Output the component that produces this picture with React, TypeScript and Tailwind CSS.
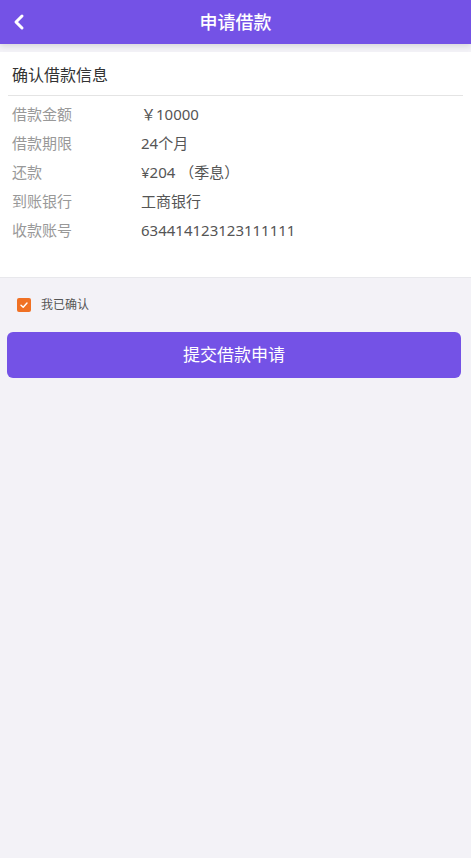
import React from 'react';

const rows: [string, string][] = [
  ['借款金额', '￥10000'],
  ['借款期限', '24个月'],
  ['还款', '¥204 （季息）'],
  ['到账银行', '工商银行'],
  ['收款账号', '634414123123111111'],
];

const App: React.FC = () => {
  return (
    <div
      className="min-h-[858px] w-full bg-[#f3f2f7]"
      style={{ fontFamily: '"Noto Sans", "Noto Sans CJK SC", sans-serif' }}
    >
      <header className="relative flex h-[44px] items-center justify-center bg-[#7452e6] shadow-[0_2px_6px_rgba(0,0,0,0.12)]">
        <svg
          className="absolute left-[13px] top-[13px]"
          width="12"
          height="18"
          viewBox="0 0 12 18"
          fill="none"
        >
          <path d="M9 3 L3 9 L9 15" stroke="white" strokeWidth="3" strokeLinecap="round" strokeLinejoin="round" />
        </svg>
        <h1 className="text-[18px] font-medium text-white">申请借款</h1>
      </header>

      <section className="mt-[8px] border-b border-[#e8e8ec] bg-white pb-[32px]">
        <div className="mx-[8px] border-b border-[#e4e4e4] px-[4px] pb-[8px] pt-[11px] text-[16px] text-[#333]">
          确认借款信息
        </div>
        <div className="px-[12px] pt-[4px]">
          {rows.map(([label, value]) => (
            <div key={label} className="flex h-[29px] items-center text-[15px]">
              <span className="w-[129px] text-[#999]">{label}</span>
              <span className="text-[#555]">{value}</span>
            </div>
          ))}
        </div>
      </section>

      <div className="flex items-center px-[17px] pt-[18px]">
        <span className="flex h-[14px] w-[14px] items-center justify-center rounded-[2px] bg-[#f07124]">
          <svg width="10" height="10" viewBox="0 0 10 10" fill="none">
            <path d="M2 5.2 L4.2 7.3 L8 3" stroke="white" strokeWidth="1.4" strokeLinecap="round" strokeLinejoin="round" />
          </svg>
        </span>
        <span className="ml-[10px] text-[12px] text-[#555]">我已确认</span>
      </div>

      <div className="pl-[7px] pr-[10px] pt-[18px]">
        <button className="flex h-[46px] w-full items-center justify-center rounded-[6px] bg-[#7452e6] text-[17px] text-white">
          提交借款申请
        </button>
      </div>
    </div>
  );
};

export default App;
